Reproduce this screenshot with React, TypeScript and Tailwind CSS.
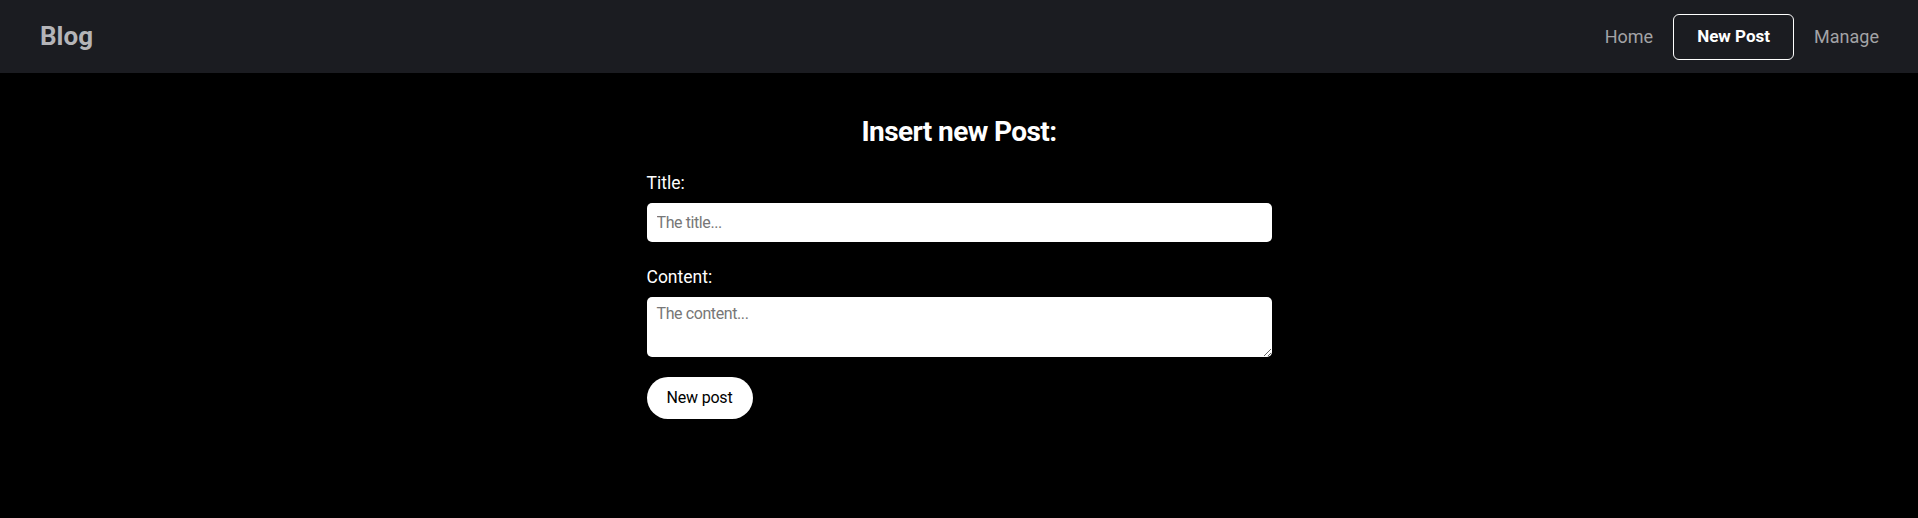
import React from "react";

export default function App() {
  const font = { fontFamily: "Roboto, 'Noto Sans', sans-serif" };
  return (
    <div className="min-h-[518px] bg-black" style={font}>
      <nav className="h-[73px] bg-[#1b1c21] flex items-center justify-between pl-[40px] pr-[39px]">
        <span className="text-[26px] font-bold text-[#b4b4b8] tracking-[0px]">Blog</span>
        <div className="flex items-center gap-[20px]">
          <a className="text-[18px] text-[#a3a3a6]">Home</a>
          <a className="h-[46px] w-[121px] flex items-center justify-center border border-white rounded-[6px] text-[17px] font-bold text-white">New Post</a>
          <a className="text-[18px] text-[#a3a3a6]">Manage</a>
        </div>
      </nav>
      <main className="w-[625px] mx-auto pt-[42px] flex flex-col">
        <h1 className="text-center text-[28px] leading-[34px] font-bold text-white tracking-[-0.6px]">Insert new Post:</h1>
        <label className="mt-[24px] text-[17.5px] leading-[20px] text-white">Title:</label>
        <input
          className="mt-[10px] h-[39px] w-full rounded-[5px] bg-white px-[10px] text-[16px] text-black placeholder:text-[#777777] outline-none tracking-[-0.4px]"
          placeholder="The title..."
        />
        <label className="mt-[25px] text-[17.5px] leading-[20px] text-white">Content:</label>
        <textarea
          className="mt-[10px] h-[60px] w-full rounded-[5px] bg-white px-[10px] py-[5px] text-[16px] text-black placeholder:text-[#777777] outline-none tracking-[-0.4px]"
          placeholder="The content..."
        />
        <div className="mt-[20px]">
          <button className="h-[42px] w-[106px] rounded-full bg-white text-[16px] text-black tracking-[-0.2px]">New post</button>
        </div>
      </main>
    </div>
  );
}
